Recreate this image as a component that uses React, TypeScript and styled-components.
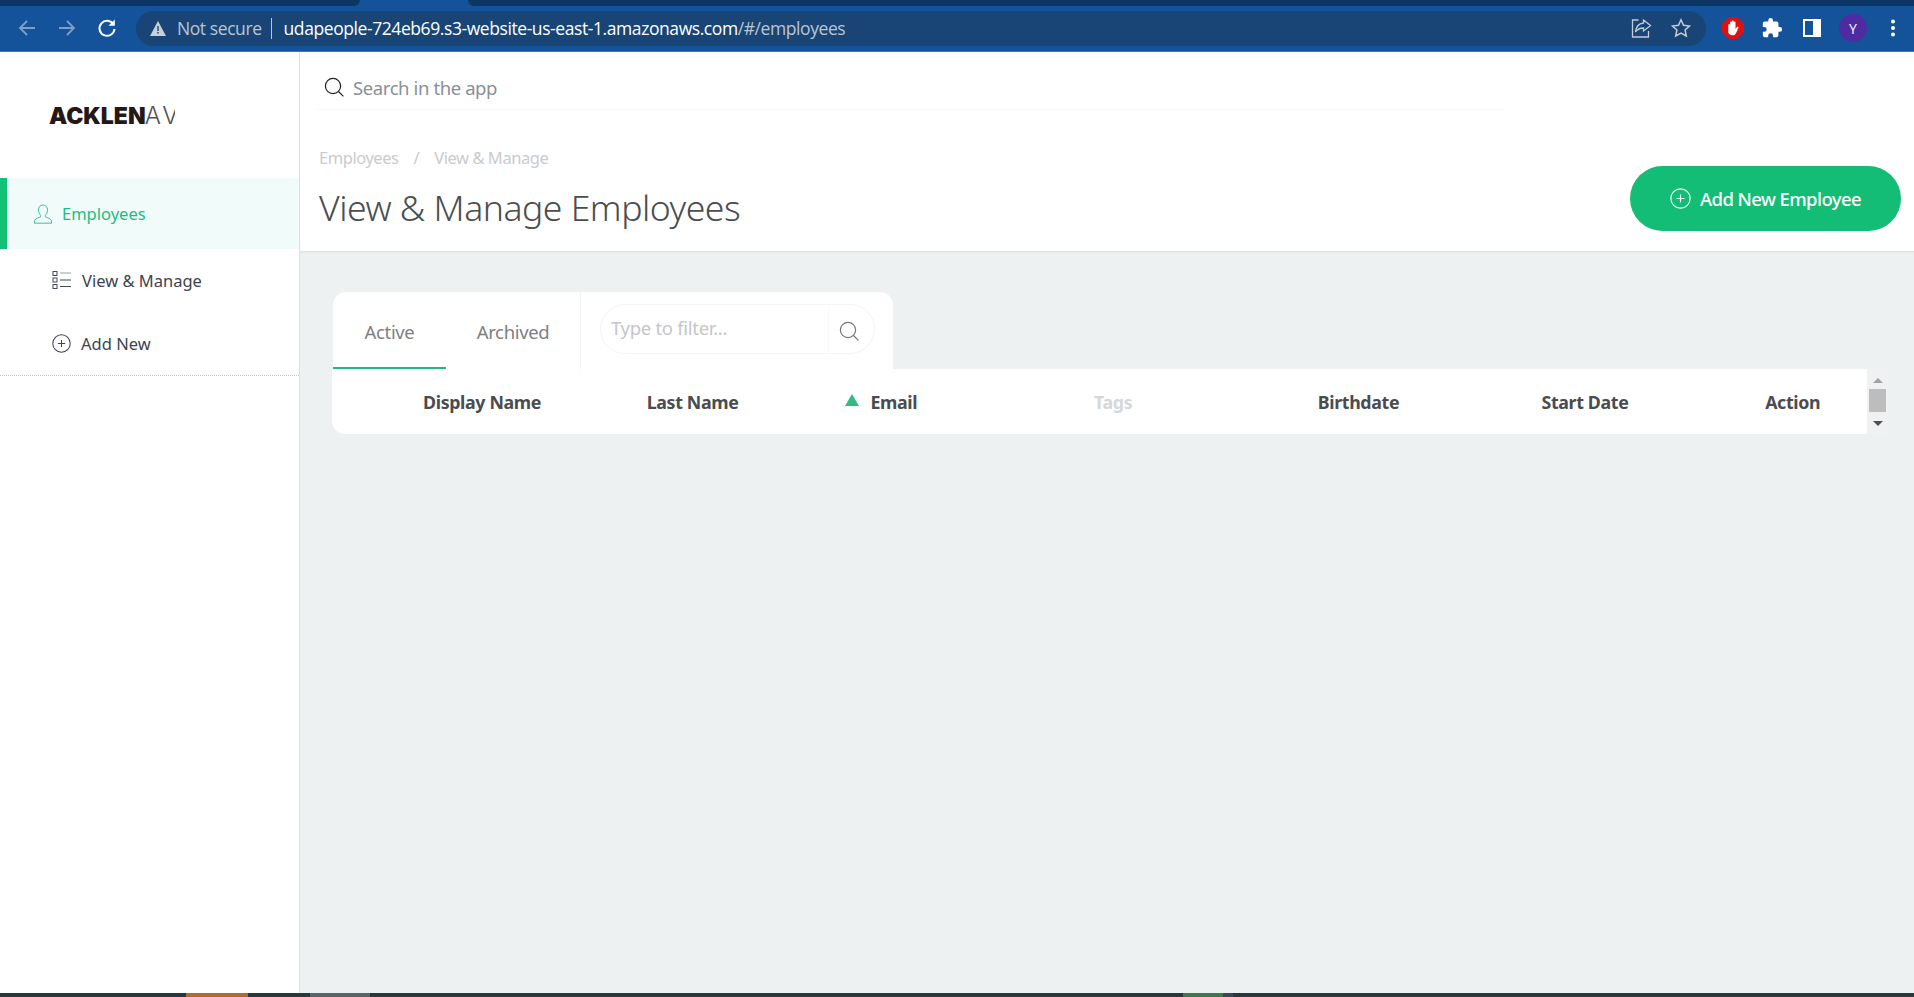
import styled, { createGlobalStyle } from "styled-components";

const uiFont = `"Noto Sans", "Open Sans", sans-serif`;
const chromeFont = `"Open Sans", "Liberation Sans", sans-serif`;

const GlobalStyle = createGlobalStyle`
  html, body {
    margin: 0;
    padding: 0;
    height: 100%;
    overflow: hidden;
    background: #fff;
  }
  * { box-sizing: border-box; }
`;

const Page = styled.div`
  display: flex;
  flex-direction: column;
  width: 1914px;
  height: 997px;
  overflow: hidden;
  font-family: ${uiFont};
`;

/* browser chrome */
const Chrome = styled.div`
  flex: 0 0 52px;
  display: flex;
  flex-direction: column;
  background: #14539a;
  border-bottom: 1px solid #3f74ad;
`;

const TabStrip = styled.div`
  flex: 0 0 6px;
  display: flex;
  background: #14539a;
`;

const DarkTab = styled.div<{ $grow?: boolean; $left?: boolean }>`
  height: 6px;
  background: #0c3664;
  ${({ $grow }) => ($grow ? "flex: 1;" : "flex: 0 0 360px;")}
  ${({ $left }) =>
    $left ? "border-bottom-right-radius: 6px;" : "border-bottom-left-radius: 6px;"}
`;

const ActiveTabGap = styled.div`
  flex: 0 0 108px;
`;

const Toolbar = styled.div`
  flex: 1;
  display: flex;
  align-items: center;
  padding: 0 0 1px 17px;
`;

const NavButton = styled.div<{ $dim?: boolean }>`
  width: 20px;
  height: 20px;
  margin-right: 20px;
  color: ${({ $dim }) => ($dim ? "#7d9fc6" : "#ffffff")};
  display: flex;
  align-items: center;
  justify-content: center;
`;

const AddressBar = styled.div`
  width: 1570px;
  height: 35px;
  margin-left: -1px;
  border-radius: 18px;
  background: #184575;
  display: flex;
  align-items: center;
  padding: 0 15px 0 14px;
  font-family: ${chromeFont};
  font-size: 17.5px;
  letter-spacing: -0.42px;
`;

const NotSecure = styled.span`
  color: #b9c5d2;
  margin-left: 11px;
`;

const UrlDivider = styled.span`
  width: 1px;
  height: 21px;
  background: #b9c5d2;
  margin: 0 12px 0 9px;
`;

const UrlHost = styled.span`
  color: #ffffff;
`;

const UrlPath = styled.span`
  color: #b9c5d2;
`;

const AddressEnd = styled.div`
  margin-left: auto;
  display: flex;
  gap: 19px;
  align-items: center;
  color: #c3ccd6;
`;

const ExtensionRow = styled.div`
  display: flex;
  align-items: center;
  margin-left: 16px;
  gap: 17px;
`;

const Avatar = styled.div`
  width: 28px;
  height: 28px;
  border-radius: 50%;
  background: #4f2ba3;
  color: #fff;
  font-family: ${chromeFont};
  font-size: 14px;
  display: flex;
  align-items: center;
  justify-content: center;
  margin-left: -2px;
`;

/* app body */
const Body = styled.div`
  flex: 1;
  display: flex;
  min-height: 0;
`;

const Sidebar = styled.aside`
  flex: 0 0 300px;
  background: #fff;
  border-right: 1px solid #dee1e3;
  display: flex;
  flex-direction: column;
`;

const LogoBox = styled.div`
  height: 126px;
  padding: 51px 0 0 49px;
`;

const Logo = styled.div`
  width: 126px;
  overflow: hidden;
  white-space: nowrap;
  font-family: "Inter", sans-serif;
  font-size: 23px;
  line-height: 26px;
  color: #231815;
`;

const LogoBold = styled.span`
  font-weight: 900;
  letter-spacing: 0;
`;

const LogoLight = styled.span`
  font-weight: 300;
  font-size: 24px;
  letter-spacing: 3px;
  margin-left: -1px;
  color: #55504e;
`;

const ActiveNav = styled.div`
  height: 71px;
  display: flex;
  align-items: center;
  gap: 9px;
  padding-left: 26px;
  background: #f1fbf9;
  border-left: 7px solid #14bf76;
  color: #1dbd80;
  font-size: 16.5px;
`;

const NavList = styled.div`
  display: flex;
  flex-direction: column;
  padding: 0 0 0 52px;
  border-bottom: 1px dotted #c4c4c4;
  height: 127px;
`;

const NavItem = styled.div<{ $height: number }>`
  height: ${({ $height }) => $height}px;
  display: flex;
  align-items: center;
  gap: 10px;
  color: #3e4450;
  font-size: 16.5px;
`;

const Main = styled.main`
  flex: 1;
  display: flex;
  flex-direction: column;
  background: #edf1f2;
  min-width: 0;
`;

const SearchWrap = styled.div`
  background: #fff;
`;

const SearchBar = styled.div`
  height: 58px;
  margin: 0 410px 0 18px;
  padding: 13px 0 0 6px;
  display: flex;
  align-items: center;
  gap: 9px;
  color: #8a8f99;
  font-size: 18.5px;
  letter-spacing: -0.4px;
  border-bottom: 1px solid #f8f9f9;
`;

const PageHeader = styled.header`
  height: 142px;
  background: #fff;
  border-bottom: 1px solid #dfe2e3;
  box-shadow: 0 1px 3px rgba(0, 0, 0, 0.04);
  padding: 36px 13px 0 19px;
  display: flex;
  justify-content: space-between;
`;

const Crumbs = styled.div`
  display: flex;
  color: #c9cbcd;
  font-size: 16.5px;
  line-height: 24px;
  letter-spacing: -0.45px;
`;

const CrumbSlash = styled.span`
  margin: 0 15px;
`;

const Title = styled.h1`
  margin: 13px 0 0;
  font-weight: 300;
  font-size: 35.6px;
  line-height: 48px;
  letter-spacing: -0.5px;
  color: #4b4d50;
`;

const AddButton = styled.button`
  width: 271px;
  height: 65px;
  margin-top: 20px;
  border: 0;
  border-radius: 33px;
  background: #14bd75;
  color: #fff;
  font-family: ${uiFont};
  font-size: 18.5px;
  font-weight: 500;
  letter-spacing: -0.6px;
  display: flex;
  align-items: center;
  justify-content: center;
  gap: 9px;
`;

const Content = styled.section`
  flex: 1;
  padding: 40px 26px 0 33px;
`;

const TabsCard = styled.div`
  width: 560px;
  height: 77px;
  background: #fff;
  border-radius: 13px 13px 0 0;
  display: flex;
`;

const TabGroup = styled.div`
  flex: 0 0 247px;
  display: flex;
  border-right: 1px solid #f1f3f4;
`;

const Tab = styled.div<{ $active?: boolean; $width: number }>`
  width: ${({ $width }) => $width}px;
  display: flex;
  align-items: center;
  justify-content: center;
  padding-top: 3px;
  color: #7d8084;
  font-size: 18.5px;
  letter-spacing: -0.35px;
  border-bottom: 2px solid ${({ $active }) => ($active ? "#28b67c" : "transparent")};
`;

const FilterPill = styled.div`
  width: 275px;
  height: 50px;
  margin: 12px 0 0 19px;
  border: 1px solid #f3f4f5;
  border-radius: 25px;
  display: flex;
  align-items: center;
`;

const FilterText = styled.div`
  flex: 1;
  padding-left: 10px;
  color: #c4c6c8;
  font-size: 18.5px;
  letter-spacing: -0.3px;
  margin-top: -3px;
`;

const FilterIcon = styled.div`
  width: 46px;
  height: 50px;
  border-left: 1px solid #f8f9f9;
  color: #777;
  display: flex;
  align-items: center;
  justify-content: center;
  padding: 3px 5px 0 0;
`;

const TableRow = styled.div`
  display: flex;
  width: 1556px;
  margin-left: -1px;
`;

const TableHead = styled.div`
  flex: 0 0 1535px;
  height: 65px;
  background: #fff;
  border-radius: 0 0 0 13px;
  padding-left: 91px;
  display: grid;
  grid-template-columns: repeat(6, 223.7px) 1fr;
  align-items: center;
`;

const HeadCell = styled.div<{ $muted?: boolean }>`
  position: relative;
  font-weight: 700;
  font-size: 17.8px;
  letter-spacing: -0.35px;
  color: ${({ $muted }) => ($muted ? "#d5d7d9" : "#4a4c50")};
`;

const SortArrow = styled.span`
  position: absolute;
  left: -25px;
  top: 4px;
  width: 0;
  height: 0;
  border-left: 7px solid transparent;
  border-right: 7px solid transparent;
  border-bottom: 12px solid #32bb83;
`;

const ScrollBar = styled.div`
  flex: 0 0 21px;
  height: 65px;
  background: #f0f1f2;
  display: flex;
  flex-direction: column;
  align-items: center;
  padding-top: 9px;
`;

const ScrollUp = styled.span`
  width: 0;
  height: 0;
  border-left: 5px solid transparent;
  border-right: 5px solid transparent;
  border-bottom: 5px solid #a3a3a3;
`;

const ScrollThumb = styled.span`
  width: 17px;
  height: 23px;
  margin: 6px 0 9px;
  background: #bdbdbd;
`;

const ScrollDown = styled.span`
  width: 0;
  height: 0;
  border-left: 5px solid transparent;
  border-right: 5px solid transparent;
  border-top: 5px solid #505050;
`;

const BottomBar = styled.div`
  flex: 0 0 4px;
  display: flex;
  background: #26393f;
`;

const BarSegment = styled.div<{ $color: string; $width: number; $gap: number }>`
  flex: 0 0 ${({ $width }) => $width}px;
  margin-left: ${({ $gap }) => $gap}px;
  background: ${({ $color }) => $color};
`;

const SearchIconBox = styled.span`
  color: #222;
  display: flex;
`;

function SearchGlyph({ size = 20 }: { size?: number }) {
  return (
    <svg width={size} height={size} viewBox="0 0 20 20" fill="none" stroke="currentColor" strokeWidth="1.2">
      <circle cx="9" cy="9" r="7.6" />
      <path d="M14.5 14.5 19.4 19.4" />
    </svg>
  );
}

function PlusCircle({ size = 19 }: { size?: number }) {
  return (
    <svg width={size} height={size} viewBox="0 0 20 20" fill="none" stroke="currentColor" strokeWidth="1.1">
      <circle cx="10" cy="10" r="9.2" />
      <path d="M10 6.2v7.6M6.2 10h7.6" />
    </svg>
  );
}

function Person() {
  return (
    <svg width="20" height="20" viewBox="0 0 20 20" fill="none" stroke="#3cc496" strokeWidth="1">
      <path d="M10 1c-3 0-4.6 2.2-4.6 5 0 2.2 1 4 2.2 5.2v1.6c-1.800.9-6.100 2-6.100 4.200v2.200h17v-2.200c0-2.200-4.300-3.300-6.100-4.200v-1.600c1.200-1.200 2.200-3 2.200-5.200 0-2.800-1.600-5-4.600-5z" />
    </svg>
  );
}

function ListGlyph() {
  return (
    <svg width="20" height="20" viewBox="0 0 20 20" fill="none" stroke="#444b58" strokeWidth="1">
      <rect x="1" y="1.500" width="4" height="4" />
      <rect x="1" y="8" width="4" height="4" />
      <rect x="1" y="14.500" width="4" height="4" />
      <path d="M8 3h11" stroke="#9a9da3" />
      <path d="M8 10h11M8 16.500h11" />
    </svg>
  );
}

function ChromeIcons() {
  return (
    <ExtensionRow>
      <svg width="22" height="22" viewBox="0 0 22 22">
        <polygon points="7,0 15,0 22,7 22,15 15,22 7,22 0,15 0,7" fill="#e01010" />
        <path d="M6.300 12.500V8a.9.9 0 0 1 1.800 0v2.500V5.500a.9.900 0 0 1 1.800 0v4.500V4.500a.9.900 0 0 1 1.800 0v5.500V5.500a.9.900 0 0 1 1.800 0v6.500l1.400-2a.9.900 0 0 1 1.500 1l-2.300 5c-.7 1.500-1.800 2.300-3.500 2.300-2.500 0-3.600-1-4.300-2.800z" fill="#fff" />
      </svg>
      <svg width="22" height="22" viewBox="0 0 24 24" fill="#fff">
        <path d="M20.500 11H19V7a2 2 0 0 0-2-2h-4V3.500a2.500 2.500 0 0 0-5 0V5H4a2 2 0 0 0-2 2v3.800h1.500a2.700 2.700 0 0 1 0 5.400H2V20a2 2 0 0 0 2 2h3.800v-1.500a2.700 2.700 0 0 1 5.400 0V22H17a2 2 0 0 0 2-2v-4h1.500a2.500 2.500 0 0 0 0-5z" />
      </svg>
      <svg width="18" height="18" viewBox="0 0 18 18" style={{ margin: "0 3px 0 3px" }}>
        <rect x="0" y="0" width="18" height="18" fill="#fff" />
        <rect x="2" y="2" width="8" height="14" fill="#14539a" />
      </svg>
      <Avatar>Y</Avatar>
      <svg width="6" height="20" viewBox="0 0 6 20" fill="#fff" style={{ marginLeft: 6 }}>
        <circle cx="3" cy="3.500" r="2" />
        <circle cx="3" cy="10" r="2" />
        <circle cx="3" cy="16.500" r="2" />
      </svg>
    </ExtensionRow>
  );
}

const headers = ["Display Name", "Last Name", "Email", "Tags", "Birthdate", "Start Date", "Action"];

const bottomSegments = [
  { color: "#b06c2c", width: 62, gap: 186 },
  { color: "#56666b", width: 60, gap: 62 },
  { color: "#3d7a4c", width: 40, gap: 813 },
  { color: "#35495a", width: 10, gap: 0 },
];

function App() {
  return (
    <Page>
      <GlobalStyle />
      <Chrome>
        <TabStrip>
          <DarkTab $left />
          <ActiveTabGap />
          <DarkTab $grow />
        </TabStrip>
        <Toolbar>
          <NavButton $dim>
            <svg width="20" height="20" viewBox="0 0 20 20" fill="none" stroke="currentColor" strokeWidth="1.800">
              <path d="M18 10H3M10 3l-7 7 7 7" />
            </svg>
          </NavButton>
          <NavButton $dim>
            <svg width="20" height="20" viewBox="0 0 20 20" fill="none" stroke="currentColor" strokeWidth="1.800">
              <path d="M2 10h15M10 3l7 7-7 7" />
            </svg>
          </NavButton>
          <NavButton>
            <svg width="20" height="20" viewBox="0 0 20 20" fill="none" stroke="currentColor" strokeWidth="2">
              <path d="M16.500 6.500A7.500 7.500 0 1 0 17.500 11" />
              <path d="M17.800 1.500v6.300h-6.300z" fill="currentColor" stroke="none" />
            </svg>
          </NavButton>
          <AddressBar>
            <svg width="16" height="15" viewBox="0 0 16 15" fill="#c9cfd6">
              <path d="M8 0 16 15H0z" />
              <rect x="7.300" y="5" width="1.400" height="5" fill="#184575" />
              <rect x="7.300" y="11" width="1.400" height="1.600" fill="#184575" />
            </svg>
            <NotSecure>Not secure</NotSecure>
            <UrlDivider />
            <UrlHost>udapeople-724eb69.s3-website-us-east-1.amazonaws.com</UrlHost>
            <UrlPath>/#/employees</UrlPath>
            <AddressEnd>
              <svg width="21" height="20" viewBox="0 0 20 20" fill="none" stroke="currentColor" strokeWidth="1.300">
                <path d="M7 2H1v17h16v-6" />
                <path d="M12 2l7 5.500-7 5.500V10c-4 0-6 1-8 4 .5-5 3-8.500 8-9z" />
              </svg>
              <svg width="20" height="20" viewBox="0 0 20 20" fill="none" stroke="currentColor" strokeWidth="1.500">
                <path d="M10 1.800l2.500 5.500 6 .7-4.400 4 1.200 6-5.300-3-5.300 3 1.200-6-4.400-4 6-.7z" />
              </svg>
            </AddressEnd>
          </AddressBar>
          <ChromeIcons />
        </Toolbar>
      </Chrome>
      <Body>
        <Sidebar>
          <LogoBox>
            <Logo>
              <LogoBold>ACKLEN</LogoBold>
              <LogoLight>AV</LogoLight>
            </Logo>
          </LogoBox>
          <ActiveNav>
            <Person />
            Employees
          </ActiveNav>
          <NavList>
            <NavItem $height={63}>
              <ListGlyph />
              View &amp; Manage
            </NavItem>
            <NavItem $height={65}>
              <PlusCircle />
              Add New
            </NavItem>
          </NavList>
        </Sidebar>
        <Main>
          <SearchWrap>
            <SearchBar>
              <SearchIconBox>
                <SearchGlyph />
              </SearchIconBox>
              Search in the app
            </SearchBar>
          </SearchWrap>
          <PageHeader>
            <div>
              <Crumbs>
                <span>Employees</span>
                <CrumbSlash>/</CrumbSlash>
                <span>View &amp; Manage</span>
              </Crumbs>
              <Title>View &amp; Manage Employees</Title>
            </div>
            <AddButton>
              <PlusCircle size={21} />
              Add New Employee
            </AddButton>
          </PageHeader>
          <Content>
            <TabsCard>
              <TabGroup>
                <Tab $active $width={113}>Active</Tab>
                <Tab $width={134}>Archived</Tab>
              </TabGroup>
              <FilterPill>
                <FilterText>Type to filter...</FilterText>
                <FilterIcon>
                  <SearchGlyph />
                </FilterIcon>
              </FilterPill>
            </TabsCard>
            <TableRow>
              <TableHead>
                {headers.map((header) => (
                  <HeadCell key={header} $muted={header === "Tags"}>
                    {header === "Email" && <SortArrow />}
                    {header}
                  </HeadCell>
                ))}
              </TableHead>
              <ScrollBar>
                <ScrollUp />
                <ScrollThumb />
                <ScrollDown />
              </ScrollBar>
            </TableRow>
          </Content>
        </Main>
      </Body>
      <BottomBar>
        {bottomSegments.map((segment) => (
          <BarSegment
            key={segment.gap + segment.color}
            $color={segment.color}
            $width={segment.width}
            $gap={segment.gap}
          />
        ))}
      </BottomBar>
    </Page>
  );
}

export default App;
